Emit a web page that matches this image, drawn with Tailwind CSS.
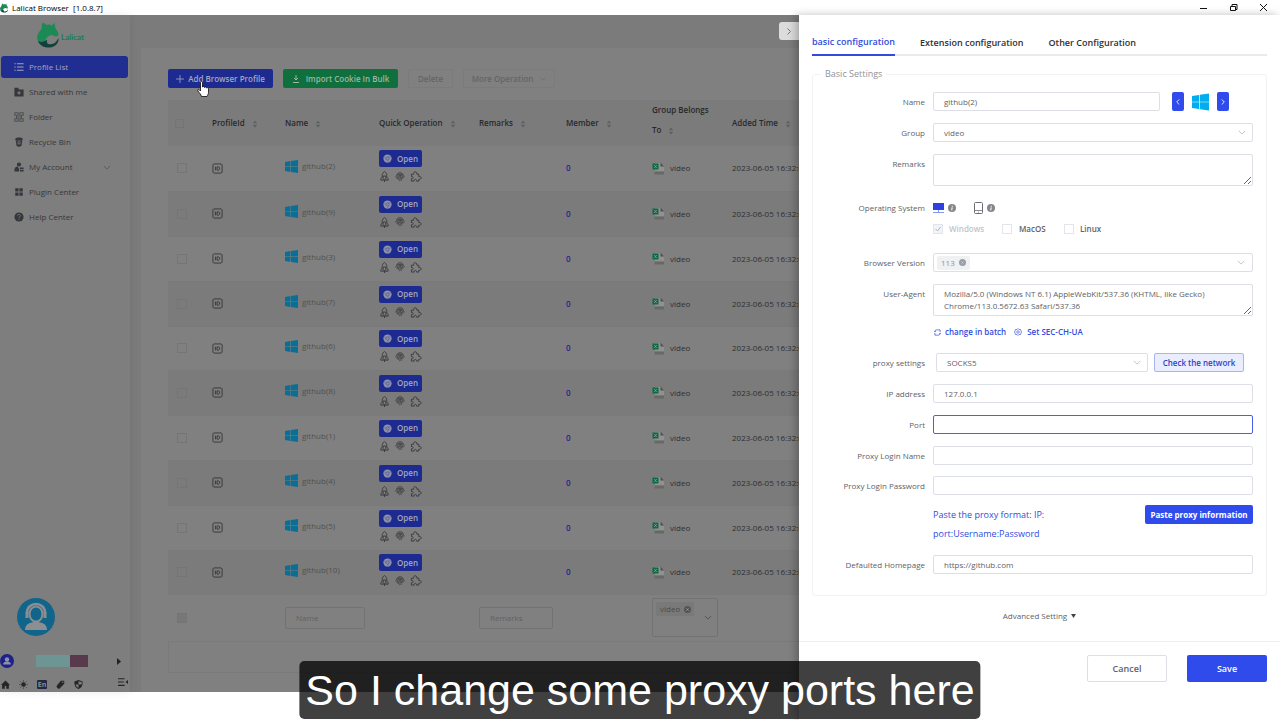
<!DOCTYPE html>
<html lang="en">
<head>
<meta charset="utf-8">
<title>Lalicat Browser</title>
<script src="https://cdn.jsdelivr.net/npm/@tailwindcss/browser@4"></script>
</head>
<body class="relative flex min-h-screen flex-col overflow-hidden bg-white font-['Open_Sans','Noto_Sans',sans-serif] text-[8px] leading-3 text-[#606266]">

<svg class="hidden" aria-hidden="true">
  <symbol id="cat" viewBox="0 0 42 50"><path fill="#1b8a55" d="M11 1c3 1 5 3 7 5 4-2 8-1 10 1 3-2 4-4 5-6 2 6 1 9 4 14 4 4 5 8 3 12-5 1-8 0-11-2-8 1-13 6-13 13 0 4 2 6 4 8C6 45 0 38 0 28 1 20 8 17 9 11 9 8 9 4 11 1Z"/><path fill="#12403c" d="M41 31c2 10-8 19-21 18C9 48 3 42 2 36c6 5 12 1 18-2-3 5 0 9 6 9 7 0 12-5 15-12Z"/></symbol>
  <symbol id="win" viewBox="0 0 24 24"><path fill="currentColor" d="M0 3.500 10 2v9.500H0zM11 1.800 24 0v11.500H11zM0 12.500h10V22L0 20.500zM11 12.500h13V24l-13-1.800z"/></symbol>
  <symbol id="sort" viewBox="0 0 8 10"><path fill="currentColor" d="M1 4 4 .500 7 4zM1 6h6L4 9.500z"/></symbol>
  <symbol id="down" viewBox="0 0 10 6"><path d="m1 1 4 4 4-4" fill="none" stroke="currentColor"/></symbol>
  <symbol id="idic" viewBox="0 0 24 24"><path fill="none" stroke="currentColor" stroke-width="2" d="M4 2h16l2 2v16l-2 2H4l-2-2V4zM7.500 8v8M11 8.500h3.500l2 2v3l-2 2H11z"/></symbol>
  <symbol id="rocket" viewBox="0 0 24 24"><path fill="none" stroke="currentColor" stroke-width="2" d="M12 1c3 2 5 5 5 9v3l3 4v3h-5H9H4v-3l3-4v-3c0-4 2-7 5-9ZM9 19v-8h6v8M12 18v6"/></symbol>
  <symbol id="finger" viewBox="0 0 24 24"><path fill="none" stroke="currentColor" stroke-width="2" d="M4 7c3-7 13-7 16 0M2 13c0-10 20-10 20 0M5 17c-1-12 15-12 14-1M8 19c-1-10 9-11 8-2M12 12c1 4 0 7-1 10M15 21l1-3"/></symbol>
  <symbol id="puzzle" viewBox="0 0 24 24"><path fill="none" stroke="currentColor" stroke-width="2" d="M2 7h5c-2-7 8-7 7 0h4v5c7-1 7 7 0 6v4h-5c1-5-6-5-5 0H2v-5c5 1 5-6 0-5z"/></symbol>
  <symbol id="xls" viewBox="0 0 24 26"><path fill="#919191" d="M5 2h11l7 7v10H5z"/><path fill="#505050" d="M16 1v8h7z"/><path fill="#686868" d="M4 19h19v6H4z"/><path fill="#0d6b43" d="M0 3h12v12H0z"/><path d="m3.500 6 5 6m0-6-5 6" stroke="#9a9a9a" stroke-width="1.500"/></symbol>
  <symbol id="swirl" viewBox="0 0 24 24"><circle cx="12" cy="12" r="11" fill="#8d90a8"/><circle cx="12" cy="12" r="4" fill="none" stroke="#4a5399" stroke-width="1.500"/><path d="M12 8h9M8.500 14 4 6M15.500 14l-4 8" stroke="#4a5399" stroke-width="1.200"/></symbol>
  <symbol id="close" viewBox="0 0 12 12"><circle cx="6" cy="6" r="6" fill="currentColor"/><path d="m4 4 4 4m0-4-4 4" stroke="#fff" stroke-opacity=".5"/></symbol>
  <symbol id="info" viewBox="0 0 12 12"><circle cx="6" cy="6" r="6" fill="#85868a"/><path d="M6.500 2.500v1.500M6.300 5 5.500 9.500" stroke="#fff" stroke-width="1.600"/></symbol>
</svg>

<!-- window title bar -->
<header class="flex h-[15px] items-center justify-between pr-3 text-black">
  <div class="flex items-center gap-1"><svg class="h-[10px] w-2"><use href="#cat"/></svg><span class="whitespace-pre">Lalicat Browser  [1.0.8.7]</span></div>
  <div class="flex items-center gap-[21px]">
    <button aria-label="Minimize"><svg class="h-[9px] w-[9px]" viewBox="0 0 9 9"><path d="M1 5.500h7" stroke="#111"/></svg></button>
    <button aria-label="Restore"><svg class="h-[9px] w-[9px]" viewBox="0 0 9 9"><path d="M1.500 3.500h5v4h-5zM3 3V1.500h5v5H7" fill="none" stroke="#111"/></svg></button>
    <button aria-label="Close"><svg class="h-[9px] w-[9px]" viewBox="0 0 9 9"><path d="m1 1 7 7m0-7L1 8" stroke="#111"/></svg></button>
  </div>
</header>

<main class="mb-[28px] flex flex-1 bg-[#7b7b7b] text-[#2e2f31]">
  <!-- sidebar -->
  <aside class="flex w-[130px] shrink-0 flex-col bg-[#7e7e7e] shadow-[0_0_8px_rgba(0,0,0,0.08)]">
    <div class="flex h-10 items-center gap-[2px] pl-[37px] text-[#1f7a50]">
      <svg class="h-[26px] w-[22px]"><use href="#cat"/></svg><span class="mt-1 font-['Lato',sans-serif] text-[8px] font-bold">Lalicat</span>
    </div>
    <nav class="mt-px flex flex-col gap-[3px] px-px text-[#36373a]">
      <a href="#" class="mr-px flex h-[22px] items-center gap-[5px] rounded-[3px] bg-[#202e92] pl-[13px] text-[#a3a6bd]"><svg class="h-[10px] w-[10px]" viewBox="0 0 24 24"><path d="M1 4h3m3 0h16M1 12h3m3 0h16M1 20h3m3 0h16" stroke="currentColor" stroke-width="2.500"/></svg>Profile List</a>
      <a href="#" class="flex h-[22px] items-center gap-[5px] pl-[13px]"><svg class="h-[10px] w-[10px]" viewBox="0 0 24 24"><path fill="currentColor" d="M1 2h9l2 4h11v17H1z"/><path d="M12 10v8m-4-4h8" stroke="#7e7e7e" stroke-width="3"/></svg>Shared with me</a>
      <a href="#" class="flex h-[22px] items-center gap-[5px] pl-[13px]"><svg class="h-[10px] w-[10px]" viewBox="0 0 24 24"><path fill="none" stroke="#505153" stroke-width="2.500" d="M2 2h8v6H2zM14 2h8v6h-8zM2 16h8v6H2zM14 16h8v6h-8zM6 8v4h12V8M6 16v-4h12v4"/></svg>Folder</a>
      <a href="#" class="flex h-[22px] items-center gap-[5px] pl-[13px]"><svg class="h-[10px] w-[10px]" viewBox="0 0 24 24"><path fill="currentColor" d="M3 4c2-4 16-4 18 0v3H3zM4 8h16l-2 13c-3 3-9 3-12 0z"/><circle cx="12" cy="14" r="3" fill="none" stroke="#7e7e7e" stroke-width="2"/></svg>Recycle Bin</a>
      <a href="#" class="flex h-[22px] items-center gap-[5px] pr-[18px] pl-[13px]"><svg class="h-[10px] w-[10px]" viewBox="0 0 24 24"><circle cx="12" cy="6" r="5" fill="currentColor"/><path fill="currentColor" d="M1 21c0-7 3-10 8-10l3 5v7H1zM14 13h9v10h-9z"/><path d="M15 18h8" stroke="#7e7e7e" stroke-width="2"/></svg><span class="flex-1">My Account</span><svg class="h-[5px] w-2 text-[#555]"><use href="#down"/></svg></a>
      <a href="#" class="flex h-[22px] items-center gap-[5px] pl-[13px]"><svg class="h-[10px] w-[10px]" viewBox="0 0 24 24"><path fill="currentColor" d="M3 3h8v8H3zM13 3h8v8h-8zM3 13h8v8H3zM13 13h8v8h-8z"/></svg>Plugin Center</a>
      <a href="#" class="flex h-[22px] items-center gap-[5px] pl-[13px]"><svg class="h-[10px] w-[10px]" viewBox="0 0 24 24"><circle cx="12" cy="12" r="11" fill="currentColor"/><path fill="none" stroke="#7e7e7e" stroke-width="2" d="M8.500 9c0-5 7-4 7 0 0 2-3.500 2.500-3.500 5m0 2v2.500"/></svg>Help Center</a>
    </nav>
    <div class="mt-auto">
      <svg class="ml-[17px] h-[38px] w-[38px]" viewBox="0 0 38 38"><circle cx="19" cy="19" r="19" fill="#11658a"/><path fill="#8b8f92" d="M8 32c0-6 5-8 11-8s11 2 11 8z"/><ellipse cx="19" cy="16" rx="6.500" ry="7.500" fill="#11658a" stroke="#8b8f92" stroke-width="2"/><path d="M10 15c0-12 18-12 18 0" fill="none" stroke="#8b8f92" stroke-width="2.500"/><path fill="#8b8f92" d="M8.500 14h3v6h-3zM26.500 14h3v6h-3z"/></svg>
      <div class="mt-[18px] flex h-[14px] items-center">
        <svg class="h-[14px] w-[14px]" viewBox="0 0 14 14"><circle cx="7" cy="7" r="7" fill="#1e2188"/><circle cx="7" cy="5.500" r="2.200" fill="#8d8fae"/><path fill="#8d8fae" d="M3 10.500c0-4 8-4 8 0z"/></svg>
        <span class="ml-[22px] h-3 w-[34px] bg-[#6c9594]"></span><span class="h-3 w-[18px] bg-[#583a4c]"></span>
        <svg class="ml-[29px] h-[7px] w-1" viewBox="0 0 4 7"><path d="M0 0v7l4-3.500z" fill="#222"/></svg>
      </div>
      <div class="flex h-6 items-center gap-[9px] pt-[10px] pb-[2px] pl-px text-[#242528]">
        <svg class="h-[9px] w-[9px]" viewBox="0 0 24 24"><path fill="currentColor" d="M12 1 0 13h3v10h7v-7h4v7h7V13h3z"/></svg>
        <svg class="h-[9px] w-[9px]" viewBox="0 0 24 24"><circle cx="12" cy="12" r="6" fill="currentColor"/><path d="M12 1v3m0 16v3M1 12h3m16 0h3M4 4l2 2m12 12 2 2M4 20l2-2M18 6l2-2" stroke="currentColor" stroke-width="2"/></svg>
        <span class="flex h-[9px] w-[10px] items-center justify-center rounded-[1px] bg-[#242740] text-[7px] leading-[9px] font-bold text-[#8c8c8c]">En</span>
        <svg class="h-[9px] w-[9px]" viewBox="0 0 24 24"><path fill="currentColor" d="M13 2h9v8L9 23c-3 1-9-4-7-8z"/><circle cx="18" cy="6" r="1.800" fill="#7e7e7e"/></svg>
        <svg class="h-[9px] w-[9px]" viewBox="0 0 24 24"><path fill="currentColor" d="m12 0 11 4c1 10-3 17-11 20C4 21 0 14 1 4z"/><path fill="#7e7e7e" d="M12 3v9h8c1-2 1-4 1-6zM12 12v9c-4-2-7-5-8-9z"/></svg>
        <svg class="mr-[2px] mb-1 ml-auto h-[10px] w-[10px]" viewBox="0 0 12 12"><path d="M0 2h8M0 6h7M0 10h8" stroke="currentColor" stroke-width="1.300"/><path fill="currentColor" d="M12 3.500v5L9 6z"/></svg>
      </div>
    </div>
  </aside>

  <!-- profile list -->
  <section class="mt-[33px] ml-[11px] min-w-0 flex-1 bg-[#808080] pt-[21px] pl-[27px]">
    <div class="flex h-[19px] gap-[10px] font-semibold">
      <button class="flex h-[19px] w-[105px] items-center justify-center gap-1 rounded-[2px] bg-[#1d2b90] text-[#a3a6bd]"><svg class="h-2 w-2" viewBox="0 0 8 8"><path d="M4 0v8M0 4h8" stroke="currentColor" stroke-width=".8"/></svg>Add Browser Profile</button>
      <button class="flex h-[19px] w-[115px] items-center justify-center gap-[6px] rounded-[2px] bg-[#0f6f3d] text-[#9db5a7]"><svg class="h-2 w-2" viewBox="0 0 8 8"><path d="M4 0v5M2 3l2 2 2-2M1 7.500h6" fill="none" stroke="currentColor"/></svg>Import Cookie In Bulk</button>
      <button class="h-[19px] w-[45px] rounded-[2px] border border-[#7b7b7b] text-[#646567]">Delete</button>
      <button class="flex h-[19px] w-[92px] items-center justify-center gap-[7px] rounded-[2px] border border-[#7b7b7b] text-[#646567]">More Operation<svg class="h-1 w-[6px]"><use href="#down"/></svg></button>
    </div>
    <table class="mt-3 w-full table-fixed border-collapse text-left">
      <colgroup><col class="w-11"><col class="w-[73px]"><col class="w-[94px]"><col class="w-[100px]"><col class="w-[87px]"><col class="w-[86px]"><col class="w-20"><col></colgroup>
      <thead class="bg-[#7b7b7b] text-[#28292b]">
        <tr class="h-[46px]">
          <th class="pl-[7px]"><input type="checkbox" aria-label="Select all" class="block h-[9px] w-[9px] appearance-none border border-[#747474]"></th>
          <th class="font-semibold">ProfileId<svg class="ml-[7px] inline h-2 w-[6px] text-[#5e5f61]"><use href="#sort"/></svg></th>
          <th class="font-semibold">Name<svg class="ml-[7px] inline h-2 w-[6px] text-[#5e5f61]"><use href="#sort"/></svg></th>
          <th class="font-semibold">Quick Operation<svg class="ml-[7px] inline h-2 w-[6px] text-[#5e5f61]"><use href="#sort"/></svg></th>
          <th class="font-semibold">Remarks<svg class="ml-[7px] inline h-2 w-[6px] text-[#5e5f61]"><use href="#sort"/></svg></th>
          <th class="font-semibold">Member<svg class="ml-[7px] inline h-2 w-[6px] text-[#5e5f61]"><use href="#sort"/></svg></th>
          <th class="pb-[6px] leading-5 font-semibold">Group Belongs<br>To<svg class="ml-[7px] inline h-2 w-[6px] text-[#5e5f61]"><use href="#sort"/></svg></th>
          <th class="font-semibold">Added Time<svg class="ml-[7px] inline h-2 w-[6px] text-[#5e5f61]"><use href="#sort"/></svg></th>
        </tr>
      </thead>
      <tbody id="rows"></tbody>
      <tfoot>
        <tr class="h-[47px]">
          <td class="pl-[9px]"><input type="checkbox" disabled aria-label="Select filter row" class="block h-[10px] w-[10px] appearance-none border border-[#757575] bg-[#777]"></td>
          <td></td>
          <td><input aria-label="Name" placeholder="Name" class="h-[22px] w-20 rounded-[2px] border border-[#727272] px-[10px] placeholder:text-[#606163]"></td>
          <td></td>
          <td><input aria-label="Remarks" placeholder="Remarks" class="h-[22px] w-[74px] rounded-[2px] border border-[#727272] px-[10px] placeholder:text-[#606163]"></td>
          <td></td>
          <td><button aria-label="Group filter" class="flex h-[39px] w-[66px] rounded-[2px] border border-[#727272] p-[3px]"><span class="flex h-[14px] items-center gap-1 bg-[#797979] pr-[3px] pl-1 text-[#4a4b4d]">video<svg class="h-[7px] w-[7px] text-[#555]"><use href="#close"/></svg></span><svg class="mr-[2px] ml-auto h-[5px] w-2 self-center text-[#4c4d4f]"><use href="#down"/></svg></button></td>
          <td></td>
        </tr>
      </tfoot>
    </table>
    <div class="h-8 border border-[#7a7a7a]"></div>
  </section>
</main>

<button aria-label="Collapse panel" class="absolute top-[22px] right-[481px] flex h-[18px] w-5 items-center justify-center rounded-l-[3px] bg-[#dcdcdc]"><svg class="h-[7px] w-1" viewBox="0 0 4 7"><path d="m.5.5 3 3-3 3" fill="none" stroke="#777"/></svg></button>

<!-- configuration drawer -->
<form class="absolute top-[15px] right-0 bottom-0 flex w-[481px] flex-col bg-white shadow-[-3px_0_8px_rgba(0,0,0,0.25)]">
  <div class="flex-1 px-[13px] pt-[17px]">
    <div role="tablist" class="flex gap-[25px] border-b-2 border-[#e9eaee] text-[9px] font-semibold text-[#303133]">
      <button type="button" role="tab" aria-selected="true" class="-mb-[2px] h-6 border-b-2 border-[#304be0] pb-[2px] text-[#304be0]">basic configuration</button>
      <button type="button" role="tab" class="h-[22px]">Extension configuration</button>
      <button type="button" role="tab" class="h-[22px]">Other Configuration</button>
    </div>
    <fieldset class="mt-3 flex flex-col gap-3 rounded-[3px] border border-[#f1f2f4] pt-3 pr-[13px] pb-[21px]">
      <legend class="ml-2 px-1 text-[9px] leading-3 text-[#909399]">Basic Settings</legend>
      <div class="flex items-center gap-2"><label for="name" class="w-28 text-right">Name</label>
        <input id="name" value="github(2)" class="h-[19px] min-w-0 flex-1 rounded-[2px] border border-[#dcdfe6] px-[10px]">
        <div class="ml-1 flex w-[81px] items-center gap-2">
          <button type="button" aria-label="Previous" class="flex h-[19px] w-3 items-center justify-center rounded-[2px] bg-[#2f4bec]"><svg class="h-[6px] w-1" viewBox="0 0 4 7"><path d="m3.500.5-3 3 3 3" fill="none" stroke="#fff"/></svg></button>
          <svg class="h-[18px] w-[17px] text-[#00adef]"><use href="#win"/></svg>
          <button type="button" aria-label="Next" class="flex h-[19px] w-3 items-center justify-center rounded-[2px] bg-[#2f4bec]"><svg class="h-[6px] w-1" viewBox="0 0 4 7"><path d="m.5.5 3 3-3 3" fill="none" stroke="#fff"/></svg></button>
        </div></div>
      <div class="flex items-center gap-2"><label for="group" class="w-28 text-right">Group</label>
        <div class="relative flex-1"><select id="group" class="block h-[19px] w-full appearance-none rounded-[2px] border border-[#dcdfe6] px-[10px]"><option>video</option></select><svg class="pointer-events-none absolute top-[7px] right-[7px] h-[5px] w-2 text-[#b4b8c0]"><use href="#down"/></svg></div></div>
      <div class="flex gap-2"><label for="remarks" class="mt-1 w-28 text-right">Remarks</label>
        <textarea id="remarks" class="block h-8 flex-1 rounded-[2px] border border-[#dcdfe6] px-[10px] py-1"></textarea></div>
      <div class="mt-1 flex gap-2"><span class="w-28 text-right">Operating System</span>
        <div class="flex flex-1 flex-col gap-[9px]">
          <div class="flex h-3 items-center">
            <svg class="h-[11px] w-[11px]" viewBox="0 0 11 11"><path fill="#2f42e0" d="M0 0h11v7H0z"/><path d="M5.500 7v2M0 9.500h4m3 0h4M4 9.500h3" stroke="#8a95ee"/></svg>
            <svg class="ml-1 h-2 w-2"><use href="#info"/></svg>
            <svg class="ml-[18px] h-3 w-[9px]" viewBox="0 0 9 12"><rect x=".5" y=".5" width="8" height="11" rx="1" fill="none" stroke="#6c6e76"/><path d="M1 8.500h7M4 10.200h1" stroke="#6c6e76" stroke-width=".8"/></svg>
            <svg class="ml-1 h-2 w-2"><use href="#info"/></svg>
          </div>
          <div class="flex h-3 items-center font-semibold">
            <label class="relative flex w-[69px] items-center gap-[6px] text-[#c0c4cc]"><input type="checkbox" checked disabled class="h-[10px] w-[10px] appearance-none border border-[#e2e5ea] bg-[#f2f4f8]"><svg class="absolute left-[2px] h-[6px] w-[6px]" viewBox="0 0 6 6"><path d="m.5 3 2 2 3-4" fill="none" stroke="#b0b4bc"/></svg>Windows</label>
            <label class="flex w-[62px] items-center gap-[7px]"><input type="checkbox" class="h-[10px] w-[10px] appearance-none border border-[#e2e5ea]">MacOS</label>
            <label class="flex items-center gap-[6px]"><input type="checkbox" class="h-[10px] w-[10px] appearance-none border border-[#e2e5ea]">Linux</label>
          </div>
        </div></div>
      <div class="mt-[6px] flex items-center gap-2"><label for="ver" class="w-28 text-right">Browser Version</label>
        <button type="button" id="ver" class="flex h-[19px] flex-1 items-center rounded-[2px] border border-[#dcdfe6] pr-[7px] pl-[3px] text-[#909399]"><span class="flex h-[14px] items-center gap-1 rounded-[2px] bg-[#f0f1f3] px-1">113<svg class="h-[7px] w-[7px] text-[#9b9ea5]"><use href="#close"/></svg></span><svg class="ml-auto h-[5px] w-2 text-[#b4b8c0]"><use href="#down"/></svg></button></div>
      <div class="flex gap-2"><label for="ua" class="mt-1 w-28 text-right">User-Agent</label>
        <textarea id="ua" class="block h-8 flex-1 rounded-[2px] border border-[#dcdfe6] px-[10px] py-[3px]">Mozilla/5.0 (Windows NT 6.1) AppleWebKit/537.36 (KHTML, like Gecko) Chrome/113.0.5672.63 Safari/537.36</textarea></div>
      <div class="-mt-[2px] flex items-center gap-2 pl-[121px] font-semibold text-[#304be0]">
        <a href="#" class="flex items-center gap-1"><svg class="h-[7px] w-[7px]" viewBox="0 0 16 16"><path d="M14 7V2H5a4 4 0 0 0-3 4m0 3v5h9a4 4 0 0 0 3-4M0 5l2 2 2-2m8 6 2-2 2 2" fill="none" stroke="currentColor" stroke-width="1.600"/></svg>change in batch</a>
        <a href="#" class="flex items-center gap-[5px]"><svg class="h-2 w-2" viewBox="0 0 16 16"><path d="m8 1 2 2h3l1 3 1 2-1 2-1 3h-3l-2 2-2-2H3l-1-3-1-2 1-2 1-3h3z" fill="none" stroke="currentColor" stroke-width="1.300"/><circle cx="8" cy="8" r="2.500" fill="none" stroke="currentColor" stroke-width="1.300"/></svg>Set SEC-CH-UA</a></div>
      <div class="mt-[3px] flex items-center gap-2"><label for="proxy" class="w-28 text-right">proxy settings</label>
        <div class="flex flex-1 gap-[6px] pr-[9px] pl-[3px]"><div class="relative flex-1"><select id="proxy" class="block h-[19px] w-full appearance-none rounded-[2px] border border-[#dcdfe6] px-[10px]"><option>SOCKS5</option></select><svg class="pointer-events-none absolute top-[7px] right-[7px] h-[5px] w-2 text-[#b4b8c0]"><use href="#down"/></svg></div>
        <button type="button" class="h-[19px] w-[90px] rounded-[2px] border border-[#a9b5f3] bg-[#e9edfd] font-semibold text-[#2f42c8]">Check the network</button></div></div>
      <div class="flex items-center gap-2"><label for="ip" class="w-28 text-right">IP address</label><input id="ip" value="127.0.0.1" class="h-[19px] flex-1 rounded-[2px] border border-[#dcdfe6] px-[10px]"></div>
      <div class="flex items-center gap-2"><label for="port" class="w-28 text-right">Port</label><input id="port" class="h-[19px] flex-1 rounded-[2px] border border-[#4a5fe8] px-[10px]"></div>
      <div class="flex items-center gap-2"><label for="pl" class="w-28 text-right">Proxy Login Name</label><input id="pl" class="h-[19px] flex-1 rounded-[2px] border border-[#dcdfe6] px-[10px]"></div>
      <div class="-mt-px flex items-center gap-2"><label for="pp" class="w-28 text-right">Proxy Login Password</label><input id="pp" type="password" class="h-[19px] flex-1 rounded-[2px] border border-[#dcdfe6] px-[10px]"></div>
      <div class="-mt-[2px] flex items-start justify-between pl-[120px]"><p class="w-32 text-[9px] leading-[19px] text-[#304be0]">Paste the proxy format: IP: port:Username:Password</p>
        <button type="button" class="h-[19px] w-[108px] rounded-[2px] bg-[#2f4bec] font-bold text-white">Paste proxy information</button></div>
      <div class="flex items-center gap-2"><label for="home" class="w-28 text-right">Defaulted Homepage</label><input id="home" value="https://github.com" class="h-[19px] flex-1 rounded-[2px] border border-[#dcdfe6] px-[10px]"></div>
    </fieldset>
    <button type="button" class="mx-auto mt-[14px] flex items-center gap-1 text-[#606266]">Advanced Setting<svg class="h-1 w-[5px]" viewBox="0 0 5 4"><path d="M0 0h5L2.500 4z" fill="#444"/></svg></button>
  </div>
  <div class="flex h-[79px] justify-end gap-5 border-t border-[#eceef2] pt-[13px] pr-[13px] text-[9px] font-semibold">
    <button type="button" class="h-[27px] w-20 rounded-[2px] border border-[#dcdfe6]">Cancel</button>
    <button type="submit" class="h-[27px] w-20 rounded-[2px] bg-[#2f4bec] text-white">Save</button>
  </div>
</form>

<!-- pointer -->
<svg class="absolute top-[81px] left-[197px] h-4 w-3" viewBox="0 0 24 32"><path d="M7 3c0-3 4-3 4 0v9c1-2 4-1 4 1 1-2 4-1 4 1 2-2 4 0 4 2v7c0 3-2 5-3 8H9c-1-4-4-7-7-11-2-3 1-5 3-2l2 2z" fill="#fff" stroke="#000" stroke-width="1.500"/></svg>

<!-- caption -->
<p class="absolute bottom-px left-1/2 -translate-x-1/2 rounded-[5px] bg-black/75 px-[6px] font-['Liberation_Sans',Arial,sans-serif] text-[43px] leading-[58px] whitespace-nowrap text-white">So I change some proxy ports here</p>

<script>
const names = ["github(2)", "github(9)", "github(3)", "github(7)", "github(6)", "github(8)", "github(1)", "github(4)", "github(5)", "github(10)"];
document.getElementById("rows").innerHTML = names.map(n => `
<tr class="h-[45px] border-b border-[#7a7a7a] even:bg-[#7b7b7b] nth-[5n]:h-[44px]">
  <td class="pl-[9px]"><input type="checkbox" aria-label="Select ${n}" class="block h-[10px] w-[10px] appearance-none border border-[#757575]"></td>
  <td><svg class="h-[11px] w-[11px] text-[#353638]"><use href="#idic"/></svg></td>
  <td class="pb-1"><span class="flex items-center gap-1 text-[#505153]"><svg class="h-[13px] w-[13px] text-[#0a6f96]"><use href="#win"/></svg>${n}</span></td>
  <td class="pb-1"><button class="flex h-[17px] w-[43px] items-center justify-center gap-[5px] rounded-[2px] bg-[#1d2b90] font-semibold text-[#a3a6bd]"><svg class="h-[9px] w-[9px]"><use href="#swirl"/></svg>Open</button>
    <span class="mt-1 flex items-center gap-[5px] text-[#38393b]"><svg class="h-[11px] w-[11px]"><use href="#rocket"/></svg><svg class="h-[10px] w-[10px]"><use href="#finger"/></svg><svg class="h-[11px] w-[12px]"><use href="#puzzle"/></svg></span></td>
  <td></td>
  <td class="font-semibold text-[#1f1f8c]">0</td>
  <td><span class="flex items-center gap-[5px]"><svg class="h-[13px] w-[13px]"><use href="#xls"/></svg>video</span></td>
  <td class="whitespace-nowrap">2023-06-05 16:32:06</td>
</tr>`).join("");
</script>
</body>
</html>
